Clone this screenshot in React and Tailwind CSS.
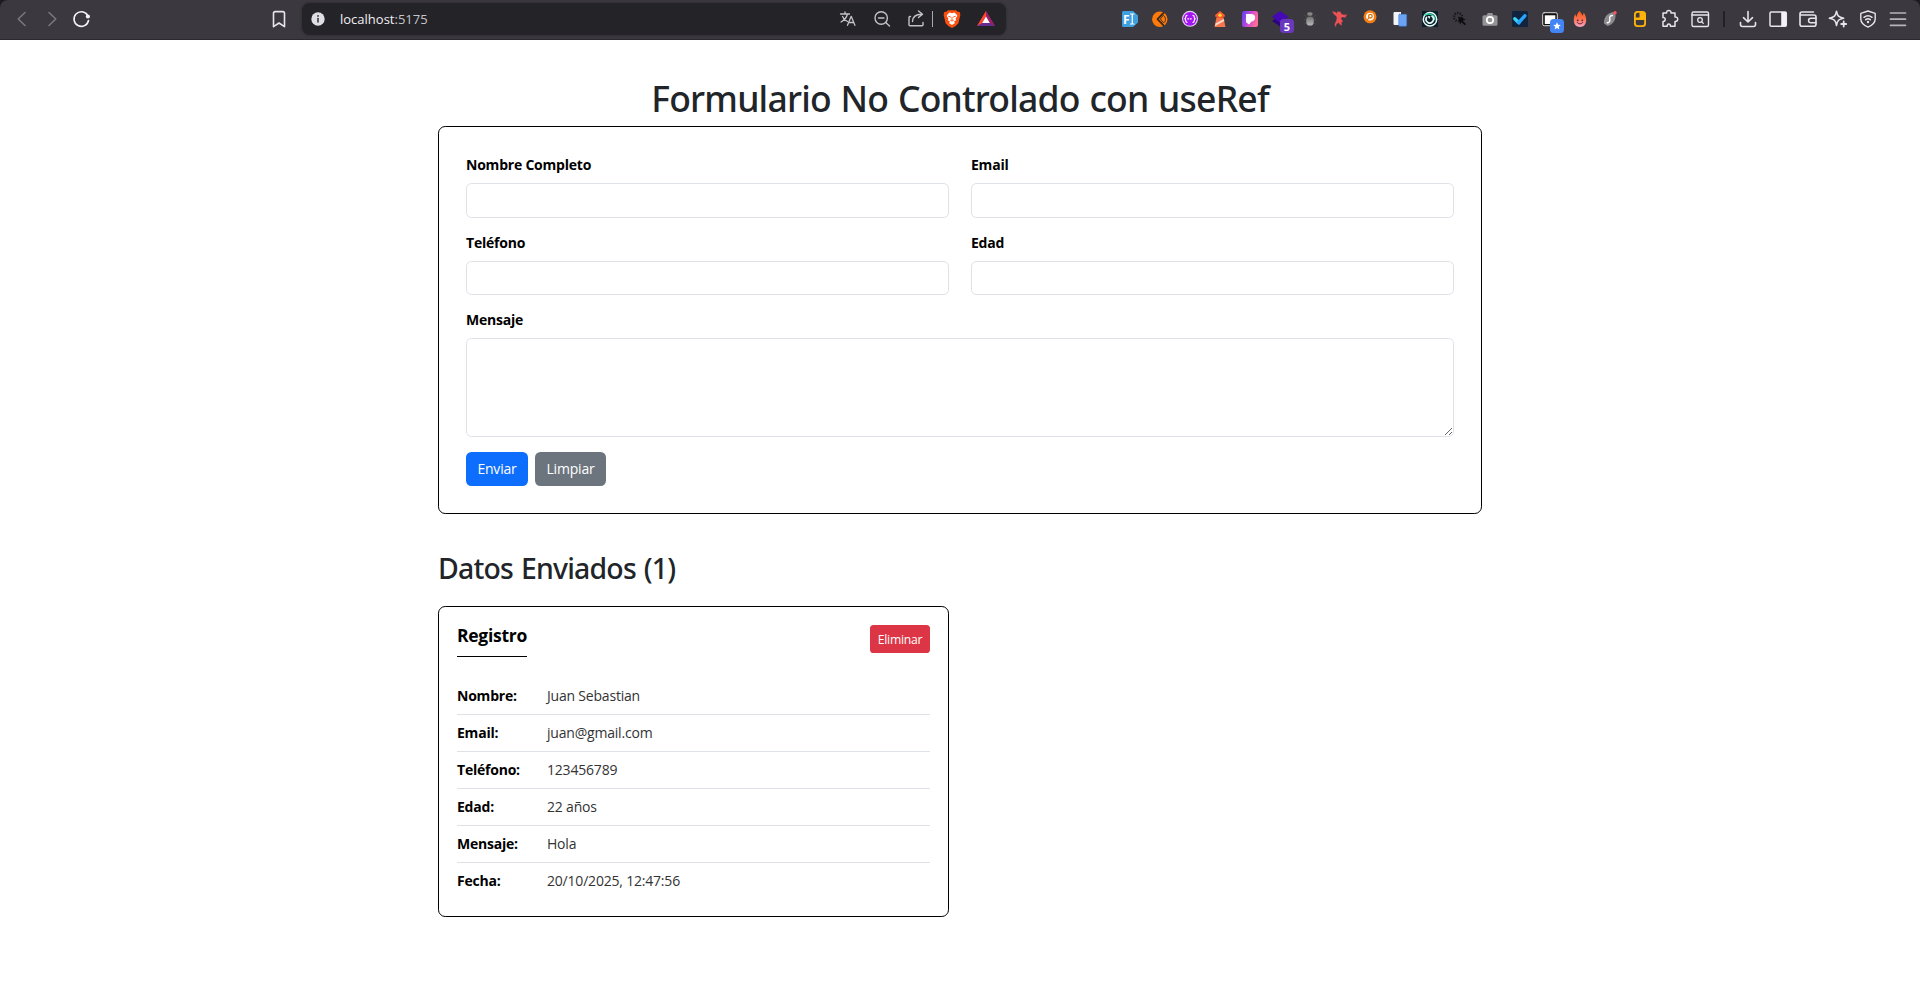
import React, { useRef } from "react";

/* Every toolbar glyph is drawn in a 30x40 cell. */
function Cell({ children, w = "w-[30px]", box = "0 0 30 40" }) {
  return (
    <svg viewBox={box} className={`${w} h-10 shrink-0`} fill="none" stroke="none" strokeLinecap="round" strokeLinejoin="round">
      {children}
    </svg>
  );
}

const LINE = { stroke: "#e6e5ea", strokeWidth: 1.5 };

function Extensions() {
  return (
    <>
      <Cell>
        <path d="M8.5 11h9.5l5 4.500v7l-5 4.500H8.500a1.500 1.500 0 0 1-1.500-1.500v-13A1.500 1.500 0 0 1 8.500 11z" fill="#3fa0e0" />
        <text x="8" y="23.500" fontSize="12" fontWeight="700" fill="#fff" fontFamily="Open Sans, sans-serif">F</text>
        <path d="M15.500 14h3.500M15.500 24H19M17.250 14v10" stroke="#fff" strokeWidth="1.200" />
      </Cell>
      <Cell>
        <circle cx="14.800" cy="19.200" r="7.700" fill="#ff7a0a" />
        <path d="M18.500 13l-6 6.200 6 6.200" stroke="#3b2a1e" strokeWidth="1.800" />
        <path d="M18.600 15.500a4.500 4.500 0 0 1 0 7.500l-3-3.800z" fill="#ff7a0a" stroke="#3b2a1e" strokeWidth=".9" />
      </Cell>
      <Cell>
        <circle cx="15" cy="18.800" r="8" fill="#e3d2ee" />
        <circle cx="15" cy="18.800" r="6.900" fill="#a413f2" />
        <path d="M12 15.300c-1.800 0-.8 3-2.200 3.500 1.400.5.400 3.500 2.200 3.500M18 15.300c1.800 0 .8 3 2.200 3.500-1.400.5-.4 3.500-2.200 3.500" stroke="#fff" strokeWidth="1.200" />
        <path d="M12.800 18.800h4.600" stroke="#fff" strokeWidth="1.300" strokeDasharray="0.8 1.800" />
      </Cell>
      <Cell>
        <path d="M10.200 15l4.800-4 4.800 4v1.700h-9.600z" fill="#ff5a2e" />
        <path d="M11.700 16.500h6.600l2.200 10.500h-11z" fill="#f4764f" />
        <path d="M12 15h6v3h-6z" fill="#ff5429" />
        <circle cx="15" cy="15.200" r="1.700" fill="#ffd63c" />
        <path d="M10.500 23.500l8.300-4.500.5 2-9.300 5z" fill="#ffd7c8" />
      </Cell>
      <Cell>
        <defs>
          <linearGradient id="px" x1="0" y1="0" x2="1" y2=".3">
            <stop offset="0" stopColor="#5b3df5" />
            <stop offset=".55" stopColor="#c84bd8" />
            <stop offset="1" stopColor="#ff6a9a" />
          </linearGradient>
        </defs>
        <rect x="7" y="11" width="16" height="16" rx="2.500" fill="url(#px)" />
        <path d="M11 14h5c2.800 0 4.300 1.600 4.100 3.900-.2 2.200-1.800 3.500-3.600 3.700L14 24.500l-3-2.200z" fill="#fff" />
      </Cell>
      <Cell>
        <path d="M15 15.500l8 5.500-8 5.500-8-5.500z" fill="#2c0578" />
        <path d="M15 11l8.500 5.700-8.500 6-8-6z" fill="#4408b4" />
        <rect x="15" y="19" width="14" height="14" rx="3.500" fill="#6a38bd" />
        <text x="22" y="30.500" fontSize="11" fontWeight="700" fill="#fff" textAnchor="middle" fontFamily="Open Sans, sans-serif">5</text>
      </Cell>
      <Cell>
        <defs>
          <linearGradient id="bug" x1="0" y1="0" x2="0" y2="1">
            <stop offset="0" stopColor="#6f6f70" />
            <stop offset="1" stopColor="#b9b9bb" />
          </linearGradient>
        </defs>
        <path d="M9.500 15.500l3 2M20.500 15.500l-3 2M9 19.800h12M9.500 24l3-2M20.500 24l-3-2" stroke="#4b4a4e" strokeWidth="1" />
        <rect x="12.200" y="12.300" width="5.400" height="3.400" rx="1.700" fill="#858586" />
        <rect x="11.300" y="16.500" width="7.400" height="9" rx="3.600" fill="url(#bug)" />
      </Cell>
      <Cell>
        <path d="M7.800 11.500l3 1 .8 1.200.9-2 2.800.2 1 2.200 2.500.9 3.300-.2-1.800 1.300.8 1.200-4.200-.4-1 1.800 1.800 2.600-1.400 1.300.2 2.600-1.700-1-1.300-1.700-2.300 1.700-.5 2.600-.9-2.500 1.500-3.300.8-3-.8-2-2.300-1.700z" fill="#ee5256" stroke="#ee5256" strokeWidth=".4" />
      </Cell>
      <Cell>
        <circle cx="15" cy="16.800" r="6.500" fill="#f27d12" />
        <circle cx="15" cy="16.600" r="3.900" fill="#fff" />
        <circle cx="15.400" cy="16.200" r="1.800" stroke="#d9740f" strokeWidth="1.300" />
        <path d="M12.600 19.300l1.500-1.600" stroke="#d9740f" strokeWidth="1.200" />
      </Cell>
      <Cell>
        <path d="M9.500 12h6.500v13H9.500a1 1 0 0 1-1-1V13a1 1 0 0 1 1-1z" fill="#f3f4f8" />
        <rect x="13.700" y="14.200" width="8" height="12" rx="1" fill="#6ba3f5" stroke="#3d74cf" strokeWidth=".5" />
      </Cell>
      <Cell>
        <rect x="7" y="11" width="16" height="16" fill="#0a1f2c" />
        <circle cx="15" cy="19.200" r="6.700" stroke="#e9fbf8" strokeWidth="1.500" />
        <path d="M10.300 15.200c4-2.500 9.500-.5 9.500 4.200" stroke="#2bd19b" strokeWidth="1.500" />
        <path d="M11.500 17.500a3.700 3.700 0 1 0 5.500-1.200" stroke="#e9fbf8" strokeWidth="1.700" />
        <path d="M12.500 16l3 .2-1.200 2.700z" fill="#e9fbf8" />
      </Cell>
      <Cell>
        <circle cx="13" cy="17" r="4" stroke="#161517" strokeWidth="2.400" strokeDasharray="1.200 1.300" strokeLinecap="butt" />
        <path d="M13 16.500l7.700 3-3 1.200 3.300 3.300-1.300 1.200-3.300-3.200-1.200 2.700z" fill="#0b0a0c" />
      </Cell>
      <Cell>
        <path d="M9 15.200h2.700l1-2.200h4.600l1 2.200H21a1.500 1.500 0 0 1 1.500 1.500v7.500a1.500 1.500 0 0 1-1.500 1.500H9a1.500 1.500 0 0 1-1.500-1.500v-7.500A1.500 1.500 0 0 1 9 15.200z" fill="#949496" />
        <circle cx="15" cy="20" r="3.200" stroke="#fff" strokeWidth="1.700" />
      </Cell>
      <Cell>
        <rect x="7" y="11" width="16" height="16" rx="1.500" fill="#10233f" />
        <path d="M9.800 18.800l4 4" stroke="#35d6f5" strokeWidth="3.400" />
        <path d="M13.800 22.500l6-6.700" stroke="#2aa5ff" strokeWidth="3.400" />
      </Cell>
      <Cell>
        <rect x="7.700" y="12.700" width="14.600" height="13" rx="1.500" fill="#111" stroke="#dcdcdc" strokeWidth="1" />
        <rect x="9.800" y="15.300" width="10.500" height="8.700" fill="#fff" />
        <rect x="15" y="19" width="14" height="14" rx="3.500" fill="#4385f5" />
        <path d="M22 22.300l1.100 2.500 2.700.2-2.100 1.800.7 2.700-2.400-1.400-2.400 1.400.7-2.700-2.100-1.800 2.700-.2z" fill="#fff" />
      </Cell>
      <Cell>
        <defs>
          <linearGradient id="fl" x1="0" y1="0" x2="0" y2="1">
            <stop offset="0" stopColor="#ff5a14" />
            <stop offset=".5" stopColor="#f9704f" />
            <stop offset="1" stopColor="#f7a6c8" />
          </linearGradient>
        </defs>
        <path d="M15 11c.3 2 2.200 3 2.600 4.800.6-.8 1-1.800.9-3.200 1.700 1.900 2.700 4.700 2.700 7.900 0 3.700-2.700 6.500-6.200 6.500s-6.200-2.800-6.200-6.500c0-2.400.4-4.800 1.400-6.500.3 1.400.8 2.400 1.500 3 .1-2.500 1.300-5 3.300-6z" fill="url(#fl)" />
        <circle cx="12.700" cy="20.300" r=".9" fill="#5b2434" />
        <circle cx="17.300" cy="20.300" r=".9" fill="#5b2434" />
        <path d="M12.300 22.500c1 1.900 4.400 1.900 5.400 0" stroke="#5b2434" strokeWidth="1" />
      </Cell>
      <Cell>
        <path d="M18 12l2.500 2.500c.3 5.500-2 9.500-8 11.500L9 23.500c-.5-6 3-10 9-11.500z" fill="#8b8b8e" />
        <path d="M17.500 15.500c-2.500 0-3 1.200-2.700 3.300.3 2.100-.2 3.700-2.500 4" stroke="#fff" strokeWidth="1.400" />
        <circle cx="20" cy="12.700" r="1.700" fill="#ff5364" />
      </Cell>
      <Cell>
        <rect x="9" y="11" width="12" height="16" rx="3.500" fill="#ffb30a" />
        <path d="M10.800 14.800a2 2 0 0 1 2-2h1.700v4.700h-3.700z" fill="#3b393f" />
        <path d="M10.800 20h8.400v3.200a2 2 0 0 1-2 2h-4.400a2 2 0 0 1-2-2z" fill="#3b393f" />
      </Cell>
      <Cell>
        <path d="M8 13h3.600c-.2-1.800 1-2.600 2.200-2.600s2.400.8 2.200 2.600h4v4c1.800-.2 2.700.9 2.700 2.200s-.9 2.400-2.700 2.200v4.800h-4.600c.1-1.500-.6-2.200-1.600-2.200s-1.700.7-1.600 2.200H8v-4.800c1.500.1 2.200-.8 2.200-2s-.7-1.900-2.200-1.800z" {...LINE} />
      </Cell>
      <Cell>
        <rect x="7" y="12" width="16.500" height="14.500" rx="1.500" {...LINE} strokeWidth="1.400" />
        <path d="M7 15h16.500" {...LINE} />
        <circle cx="15" cy="20" r="2.300" {...LINE} strokeWidth="1.300" />
        <path d="M16.800 21.900l1.500 1.500" {...LINE} strokeWidth="1.300" />
      </Cell>
    </>
  );
}

function BrowserActions() {
  return (
    <>
      <Cell>
        <path d="M15 11.500v10.300M10.500 17.700l4.500 4.300 4.500-4.300" {...LINE} strokeWidth="1.600" />
        <path d="M7.500 22.500v2a2 2 0 0 0 2 2h11a2 2 0 0 0 2-2v-2" {...LINE} strokeWidth="1.600" />
      </Cell>
      <Cell>
        <rect x="7" y="12" width="16.300" height="14.300" rx="1.200" {...LINE} />
        <path d="M18.200 12h5v14.300h-5z" fill="#f3f2f6" />
      </Cell>
      <Cell>
        <path d="M20.500 12H9a2 2 0 0 0-2 2v10.300a2 2 0 0 0 2 2h12a2 2 0 0 0 2-2V17a2 2 0 0 0-2-2H7.500" {...LINE} strokeWidth="1.600" />
        <path d="M23 18.200h-5.200a2.200 2.200 0 0 0 0 4.500H23" {...LINE} strokeWidth="1.500" />
      </Cell>
      <Cell>
        <path d="M13.500 11.200c.9 4.800 2.100 6 7.200 7-5.100 1-6.300 2.200-7.200 7.300-.9-5.100-2.100-6.300-7.200-7.300 5.100-1 6.300-2.200 7.200-7z" {...LINE} />
        <path d="M20.700 21.500v5M18.200 24h5" {...LINE} strokeWidth="1.800" />
      </Cell>
      <Cell>
        <path d="M15 11l7.200 2.400v5.400c0 4-3 6.600-7.200 8.300-4.200-1.700-7.200-4.300-7.200-8.300v-5.400z" {...LINE} strokeWidth="1.400" />
        <path d="M11 17.300c2.400-1.900 5.600-1.900 8 0M12.700 19.700c1.400-1.100 3.200-1.100 4.600 0" {...LINE} strokeWidth="1.500" />
        <circle cx="15" cy="22" r="1.200" fill="#e6e5ea" />
      </Cell>
      <Cell>
        <path d="M7.500 13h15M7.500 19.200h15M7.500 25.300h15" stroke="#b5b4b8" strokeWidth="1.700" />
      </Cell>
    </>
  );
}

function Toolbar() {
  return (
    <div className="h-10 bg-[#1c1b1f]">
      <header className="flex h-10 items-start rounded-t-lg border-b border-[#2a292d] bg-[#3b393f]">
        <div className="flex pl-[7px]">
          <Cell>
            <path d="M18 12.500l-6.800 6.500 6.800 6.500" stroke="#7b7a7f" strokeWidth="1.500" />
          </Cell>
          <Cell>
            <path d="M12 12.500l6.800 6.500-6.800 6.500" stroke="#7b7a7f" strokeWidth="1.500" />
          </Cell>
          <Cell>
            <path d="M20.600 15.300a7.300 7.300 0 1 0 .9 5.200" stroke="#f3f2f6" strokeWidth="1.600" />
            <circle cx="20.900" cy="16.500" r="2.100" fill="#f3f2f6" />
          </Cell>
        </div>
        <div className="ml-[167px] flex">
          <Cell>
            <path d="M9.500 13.300a1.700 1.700 0 0 1 1.700-1.700h7.600a1.700 1.700 0 0 1 1.700 1.700v13.400l-5.500-3.700-5.500 3.700z" {...LINE} strokeWidth="1.600" />
          </Cell>
        </div>
        <div className="ml-[8px] mt-[3px] flex h-8 w-[704px] items-center justify-between rounded-[8px] bg-[#242327] shadow-[0_0_3px_rgba(0,0,0,0.35)]">
          <div className="flex items-center">
            <Cell w="w-8" box="0 0 32 40">
              <circle cx="16" cy="20" r="6.700" fill="#dfdee4" />
              <path d="M16 19.500v3.500" stroke="#3b393f" strokeWidth="1.600" />
              <circle cx="16" cy="16.900" r=".95" fill="#3b393f" />
            </Cell>
            <span className="ml-1.5 text-[13px] leading-8 text-[#f0eff4]">
              localhost<span className="text-[#c6c5cb]">:5175</span>
            </span>
          </div>
          <div className="flex items-center pr-[5px]">
            <Cell w="w-[34px]" box="0 0 34 40">
              <path d="M9.500 15h9M14 13v2M16.500 15c-.8 3.300-3 6-6.500 8M11.500 17.500c.8 2 2.800 4 5 5" stroke="#c3c2c7" strokeWidth="1.300" />
              <path d="M16.500 26.300l3.700-9 3.700 9M17.800 23.500h4.800" stroke="#c3c2c7" strokeWidth="1.300" />
            </Cell>
            <Cell w="w-[39px]" box="0 0 39 40">
              <circle cx="16.200" cy="19" r="6.200" stroke="#c3c2c7" strokeWidth="1.400" />
              <path d="M13.500 19H19M20.800 23.500l3.700 3.500" stroke="#c3c2c7" strokeWidth="1.400" />
            </Cell>
            <Cell w="w-[28px]" box="0 0 28 40">
              <path d="M6.500 17.500H6a1 1 0 0 0-1 1v7.200a1 1 0 0 0 1 1h12a1 1 0 0 0 1-1v-2.200" stroke="#c3c2c7" strokeWidth="1.400" />
              <path d="M8.500 22.500c.2-5 3-7.300 9-7.300M14.500 12l4 3.200-4 3.300" stroke="#c3c2c7" strokeWidth="1.400" />
            </Cell>
            <div className="h-[16px] w-px bg-[#a9a8ad]" />
            <Cell w="w-[38px]" box="0 0 38 40">
              <path d="M15 11.200h8l1.700 1.500 2 .3.700 3-.7 2.500-1.300 5.700-2.700 2.900-3.700 2-3.700-2-2.700-2.900-1.300-5.700-.7-2.500.7-3 2-.3z" fill="#fb4f10" />
              <path d="M19 14.200l2.300-.6 2.500 2.200.5 1.300-1.700 2.500.5 1.700-2.300 1.500 1.300 1.200-3.100 2-3.100-2 1.300-1.200-2.300-1.500.5-1.700-1.700-2.500.5-1.300 2.500-2.200z" fill="#fff" />
              <path d="M15.600 17.300l2.200.8M22.400 17.300l-2.200.8M19 18.700v2.300M17.600 21.300l1.400.7 1.400-.7" stroke="#fb4f10" strokeWidth=".9" />
            </Cell>
            <Cell w="w-[30px]" box="0 0 30 40">
              <path d="M15 12L6 27h18z" fill="#662d91" />
              <path d="M15 12L6 27l5.200-3L15 17.500z" fill="#ff4724" />
              <path d="M15 12v5.500l3.800 6.500 5.200 3z" fill="#9e1f63" />
              <path d="M15 17.500l-3.800 6.500h7.600z" fill="#fff" />
            </Cell>
          </div>
        </div>
        <div className="ml-auto flex pr-[7px]">
          <Extensions />
          <div className="ml-[8px] mr-[8px] mt-[11px] h-4 w-0.5 bg-[#222125]" />
          <BrowserActions />
        </div>
      </header>
    </div>
  );
}

function Field({ label, inputRef, multiline }) {
  const box = "block w-full rounded-[5.4px] border border-[#dee2e6] bg-white px-[10.8px] text-[14px] text-[#212529] outline-none";
  return (
    <label className="block">
      <span className="mb-[7.4px] block text-[14px] font-bold leading-[21.6px] tracking-[-0.22px] text-black">{label}</span>
      {multiline ? (
        <textarea ref={inputRef} className={`${box} h-[98.7px] resize-y`} />
      ) : (
        <input ref={inputRef} className={`${box} h-[34.2px]`} />
      )}
    </label>
  );
}

const RECORD = [
  ["Nombre:", "Juan Sebastian"],
  ["Email:", "juan@gmail.com"],
  ["Teléfono:", "123456789"],
  ["Edad:", "22 años"],
  ["Mensaje:", "Hola"],
  ["Fecha:", "20/10/2025, 12:47:56"],
];

export default function App() {
  const nombre = useRef(null);
  const email = useRef(null);
  const telefono = useRef(null);
  const edad = useRef(null);
  const mensaje = useRef(null);

  return (
    <div className="min-h-[990px] bg-white font-['Open_Sans','Noto_Sans',sans-serif]">
      <Toolbar />
      <main className="mx-auto w-[1044px] pt-[37px]">
        <h1 className="mb-[6.2px] text-center font-['Noto_Sans','Open_Sans',sans-serif] text-[35.5px] font-medium leading-[43.2px] tracking-[-0.78px] text-[#212529] [word-spacing:1.2px]">
          Formulario No Controlado con useRef
        </h1>
        <form className="rounded-[7.2px] border border-black px-[27px] pb-[27px] pt-[27px]">
          <div className="grid grid-cols-2 gap-x-[22px] gap-y-[14.2px]">
            <Field label="Nombre Completo" inputRef={nombre} />
            <Field label="Email" inputRef={email} />
            <Field label="Teléfono" inputRef={telefono} />
            <Field label="Edad" inputRef={edad} />
            <div className="col-span-2">
              <Field label="Mensaje" inputRef={mensaje} multiline />
            </div>
          </div>
          <div className="mt-[14.8px] flex gap-[7px] text-[14px] tracking-[-0.2px] text-white">
            <button type="button" className="h-[34px] w-[62px] rounded-[5.4px] bg-[#0d6efd]">Enviar</button>
            <button type="button" className="h-[34px] w-[71px] rounded-[5.4px] bg-[#6c757d]">Limpiar</button>
          </div>
        </form>

        <h2 className="mt-[37px] font-['Noto_Sans','Open_Sans',sans-serif] text-[28.4px] font-medium leading-[34.6px] tracking-[-0.78px] text-[#212529] [word-spacing:1.2px]">
          Datos Enviados (1)
        </h2>

        <article className="mt-[20.6px] w-[511px] rounded-[7.2px] border border-black px-[18px] pb-[17.2px] pt-[18px]">
          <div className="mb-[20.8px] flex items-start justify-between">
            <h3 className="border-b border-black pb-[9.6px] text-[17.5px] font-bold leading-[21.6px] tracking-[-0.28px] text-black">Registro</h3>
            <button type="button" className="h-[28px] w-[60px] rounded-[3.6px] bg-[#dc3545] pt-0.5 text-[12.2px] tracking-[-0.25px] text-white">
              Eliminar
            </button>
          </div>
          <dl className="divide-y divide-[#dee2e6]">
            {RECORD.map(([k, v]) => (
              <div key={k} className="flex pb-[7px] pt-[7.4px] text-[14px] leading-[21.6px]">
                <dt className="w-[90px] font-bold tracking-[-0.22px] text-black">{k}</dt>
                <dd className="tracking-[-0.2px] text-[#333]">{v}</dd>
              </div>
            ))}
          </dl>
        </article>
      </main>
    </div>
  );
}
